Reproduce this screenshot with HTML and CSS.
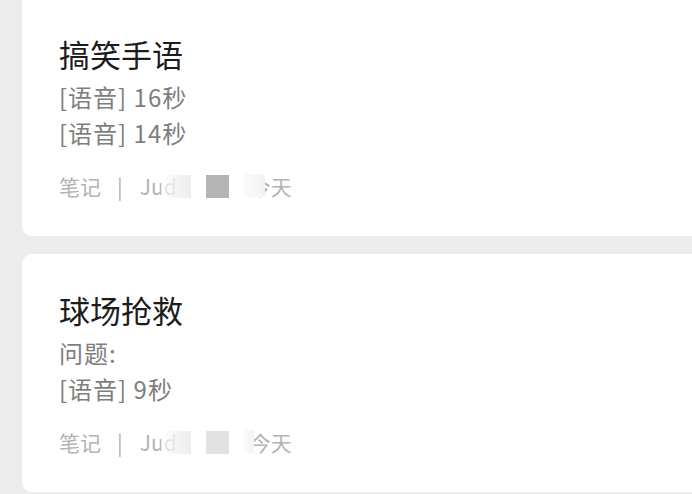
FILE: index.html
```html
<!DOCTYPE html>
<html lang="zh-CN">
<head>
  <meta charset="UTF-8" />
  <meta name="viewport" content="width=device-width, initial-scale=1.0"/>
  <title>笔记</title>
  <link rel="stylesheet" href="styles.css">
</head>
<body>

<div class="list">

  <!-- Note 1 -->
  <div class="card card-first">
    <div class="title">搞笑手语</div>
    <div class="line">[语音] 16秒</div>
    <div class="line">[语音] 14秒</div>
    <div class="meta">
      <span>笔记</span>
      <span class="sep">|</span>
      <span class="author">Jud</span>
      <span class="blur"></span>
      <span class="mask dark"></span>
      <span class="date"><span class="cover"></span>今天</span>
    </div>
  </div>

  <!-- Note 2 -->
  <div class="card">
    <div class="title">球场抢救</div>
    <div class="line">问题:</div>
    <div class="line">[语音] 9秒</div>
    <div class="meta">
      <span>笔记</span>
      <span class="sep">|</span>
      <span class="author">Jud</span>
      <span class="blur"></span>
      <span class="mask light"></span>
      <span class="date"><span class="cover soft"></span>今天</span>
    </div>
  </div>

</div>

</body>
</html>
```

FILE: styles.css
```css
body {
  margin: 0;
  background: #ececec;
  font-family: "Noto Sans CJK SC", "Noto Sans", sans-serif;
}
.list {
  padding-left: 22px;
}
.card {
  background: #fff;
  border-radius: 10px 0 0 10px;
  padding: 35px 0 35px 37px;
  margin-bottom: 18px;
}
.card-first {
  padding-top: 33px;
  border-radius: 0 0 0 10px;
}
.title {
  font-size: 31px;
  line-height: 42px;
  color: #1c1c1c;
  margin-bottom: 4px;
}
.line {
  font-size: 24px;
  line-height: 36px;
  letter-spacing: 1px;
  color: #7e7e7e;
}
.meta {
  display: flex;
  align-items: center;
  margin-top: 20px;
  height: 30px;
  font-size: 21px;
  color: #b3b3b3;
}
.sep {
  margin: 0 17px 0 16px;
}
.author {
  white-space: nowrap;
}
.blur {
  width: 30px;
  height: 23px;
  margin-left: -16px;
  background: linear-gradient(to right, rgba(255,255,255,0.6), #ececec);
}
.mask {
  width: 23px;
  height: 23px;
  margin-left: 15px;
}
.mask.dark {
  background: #b4b4b4;
}
.mask.light {
  background: #e2e2e2;
}
.date {
  position: relative;
  margin-left: 21px;
}
.cover {
  position: absolute;
  left: -6px;
  top: 3px;
  width: 21px;
  height: 23px;
  background: linear-gradient(to right, #fafafa, #f3f3f3);
}
.cover.soft {
  width: 10px;
  background: linear-gradient(to right, #fafafa, #f4f4f4);
}
```
